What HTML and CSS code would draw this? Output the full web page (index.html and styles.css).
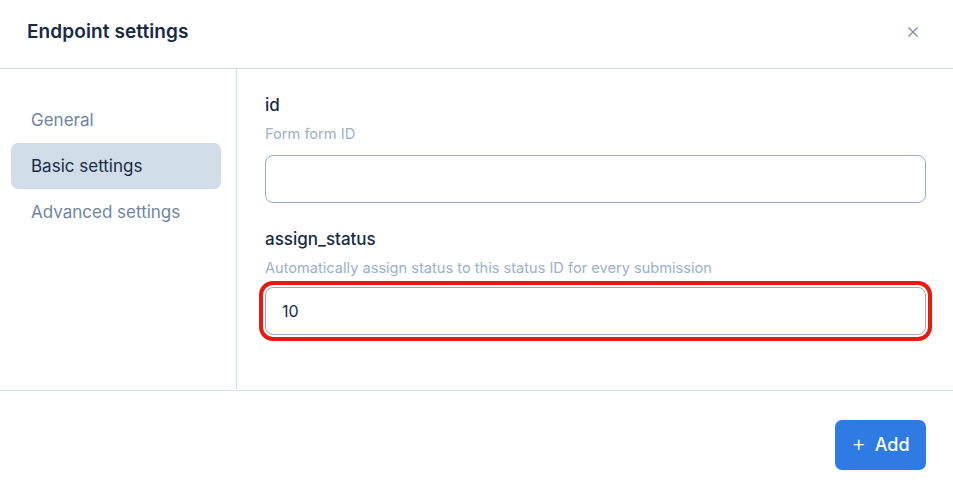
FILE: index.html
```html
<!DOCTYPE html>
<html lang="en">
<head>
<meta charset="utf-8">
<title>Endpoint settings</title>
<link rel="stylesheet" href="styles.css">
</head>
<body>
<div class="modal">
  <header class="modal-header">
    <h1 class="modal-title">Endpoint settings</h1>
    <button class="close-btn" aria-label="Close">
      <svg width="10" height="10" viewBox="0 0 10 10"><path d="M0.5 0.5 L9.5 9.5 M9.5 0.5 L0.5 9.5" stroke="#7a869a" stroke-width="1.2" fill="none"/></svg>
    </button>
  </header>
  <div class="modal-body">
    <nav class="sidebar">
      <a class="nav-item">General</a>
      <a class="nav-item active">Basic settings</a>
      <a class="nav-item">Advanced settings</a>
    </nav>
    <section class="content">
      <div class="field">
        <label class="field-label">id</label>
        <p class="field-desc">Form form ID</p>
        <input class="field-input" type="text" value="">
      </div>
      <div class="field">
        <label class="field-label">assign_status</label>
        <p class="field-desc">Automatically assign status to this status ID for every submission</p>
        <input class="field-input highlighted" type="text" value="10">
      </div>
    </section>
  </div>
  <footer class="modal-footer">
    <button class="add-btn"><span class="plus">+</span>Add</button>
  </footer>
</div>
</body>
</html>
```
FILE: styles.css
```css
* { box-sizing: border-box; }
html, body { margin: 0; padding: 0; background: #fff; }
body {
  font-family: "Inter", "Noto Sans", sans-serif;
  color: #1a2b45;
  width: 953px;
  height: 493px;
  overflow: hidden;
}
.modal { display: flex; flex-direction: column; height: 493px; }
.modal-header {
  height: 69px;
  display: flex;
  align-items: center;
  justify-content: space-between;
  padding: 0 35px 5px 27px;
  border-bottom: 1px solid #d3e0ec;
}
.modal-title {
  margin: 0;
  font-size: 19px;
  font-weight: 600;
  color: #172a45;
  letter-spacing: 0.1px;
}
.close-btn {
  background: none;
  border: none;
  padding: 0;
  width: 10px;
  height: 10px;
  display: flex;
}
.modal-body {
  display: flex;
  height: 322px;
  border-bottom: 1px solid #d3e0ec;
}
.sidebar {
  width: 237px;
  border-right: 1px solid #d3e0ec;
  padding: 28px 15px 0 11px;
  display: flex;
  flex-direction: column;
}
.nav-item {
  display: block;
  height: 46px;
  line-height: 46px;
  padding-left: 20px;
  border-radius: 7px;
  font-size: 17px;
  color: #6f86a3;
  cursor: pointer;
}
.nav-item.active { background: #d1dde9; color: #1a2b45; }
.content {
  flex: 1;
  padding: 25px 27px 0 28px;
}
.field { display: flex; flex-direction: column; }
.field + .field { margin-top: 25px; }
.field + .field .field-desc { margin-bottom: 9px; }
.field-label {
  font-size: 17px;
  font-weight: 500;
  color: #172a45;
  line-height: 22px;
}
.field-desc {
  margin: 8px 0 11px;
  font-size: 14.6px;
  color: #9bb0ca;
  line-height: 20px;
}
.field-input {
  height: 48px;
  border: 1px solid #98abc5;
  border-radius: 8px;
  padding: 0 16px;
  font-family: inherit;
  font-size: 16px;
  color: #1a2b45;
  background: #fff;
}
.field-input.highlighted {
  outline: 4.5px solid #e8190e;
  outline-offset: 2px;
}
.modal-footer {
  flex: 1;
  display: flex;
  justify-content: flex-end;
  align-items: flex-start;
  padding: 29px 27px 0 0;
}
.add-btn {
  width: 91px;
  height: 50px;
  border: none;
  border-radius: 7px;
  background: #2d7be3;
  color: #fff;
  font-family: inherit;
  font-size: 18px;
  font-weight: 500;
  display: flex;
  align-items: center;
  justify-content: center;
  gap: 9px;
  padding: 0 0 2px;
}
.plus { font-size: 22px; font-weight: 300; line-height: 1; margin-top: -2px; }
```
